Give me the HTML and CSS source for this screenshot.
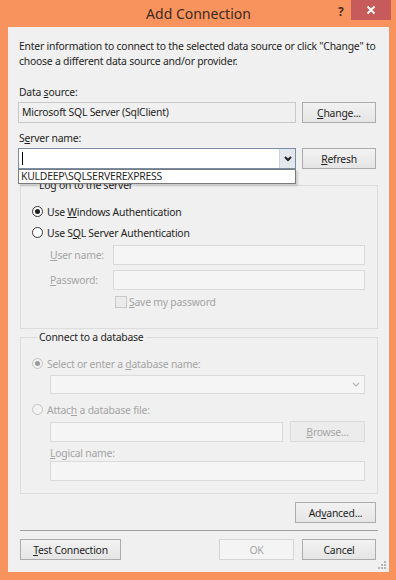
FILE: index.html
```html
<html>

<head>
  <meta charset="utf8">
  <title>Add Connection</title>
  <link rel="stylesheet" href="styles.css">
</head>

<body>
  <section class="window">
    <div class="titlebar">
      <span class="title">Add Connection</span>
      <span class="help">?</span>
      <span class="close">
        <svg width="10" height="10" viewBox="0 0 10 10"><path d="M1.5 1.5 L8.5 8.5 M8.5 1.5 L1.5 8.5" stroke="#fff" stroke-width="1.8"/></svg>
      </span>
    </div>
    <div class="client">
      <p class="intro">Enter information to connect to the selected data source or click "Change" to<br>choose a different data source and/or provider.</p>

      <div class="label ds-label">Data <u>s</u>ource:</div>
      <div class="row">
        <div class="textbox readonly">Microsoft SQL Server (SqlClient)</div>
        <button class="btn"><u>C</u>hange...</button>
      </div>

      <div class="label sn-label">S<u>e</u>rver name:</div>
      <div class="row server-row">
        <div class="combo focused">
          <span class="caret"></span>
          <span class="arrow">
            <svg width="8" height="6" viewBox="0 0 8 6"><path d="M1 1 L4 4 L7 1" stroke="#222" stroke-width="2" fill="none"/></svg>
          </span>
        </div>
        <button class="btn"><u>R</u>efresh</button>
        <div class="droplist">KULDEEP\SQLSERVEREXPRESS</div>
      </div>

      <fieldset class="group logon">
        <legend>Log on to the server</legend>
        <div class="radio-row first">
          <span class="radio checked"></span>
          <span>Use <u>W</u>indows Authentication</span>
        </div>
        <div class="radio-row">
          <span class="radio"></span>
          <span>Use S<u>Q</u>L Server Authentication</span>
        </div>
        <div class="field-row user">
          <span class="field-name disabled"><u>U</u>ser name:</span>
          <div class="textbox disabled-box"></div>
        </div>
        <div class="field-row pass">
          <span class="field-name disabled"><u>P</u>assword:</span>
          <div class="textbox disabled-box"></div>
        </div>
        <div class="check-row">
          <span class="checkbox"></span>
          <span class="disabled"><u>S</u>ave my password</span>
        </div>
      </fieldset>

      <fieldset class="group connect">
        <legend>Connect to a database</legend>
        <div class="radio-row first disabled">
          <span class="radio checked off"></span>
          <span>Select or enter a <u>d</u>atabase name:</span>
        </div>
        <div class="indent">
          <div class="combo disabled-box db-combo">
            <span class="arrow plain">
              <svg width="8" height="6" viewBox="0 0 8 6"><path d="M1 1 L4 4 L7 1" stroke="#b5b5b5" stroke-width="1.2" fill="none"/></svg>
            </span>
          </div>
        </div>
        <div class="radio-row disabled attach">
          <span class="radio off"></span>
          <span>Attac<u>h</u> a database file:</span>
        </div>
        <div class="indent file-row">
          <div class="textbox disabled-box"></div>
          <button class="btn btn-off"><u>B</u>rowse...</button>
        </div>
        <div class="indent disabled logical"><u>L</u>ogical name:</div>
        <div class="indent">
          <div class="textbox disabled-box"></div>
        </div>
      </fieldset>

      <div class="adv-row">
        <button class="btn adv">Ad<u>v</u>anced...</button>
      </div>
      <hr class="sep">
      <div class="footer">
        <button class="btn test"><u>T</u>est Connection</button>
        <span class="spacer"></span>
        <button class="btn btn-off ok">OK</button>
        <button class="btn">Cancel</button>
      </div>
      <span class="grip">
        <svg width="8" height="8" viewBox="0 0 8 8" fill="#b8b8b8"><rect x="6" y="0" width="2" height="2"/><rect x="3" y="3" width="2" height="2"/><rect x="6" y="3" width="2" height="2"/><rect x="0" y="6" width="2" height="2"/><rect x="3" y="6" width="2" height="2"/><rect x="6" y="6" width="2" height="2"/></svg>
      </span>
    </div>
  </section>
</body>

</html>
```

FILE: styles.css
```css
* {
  margin: 0;
  padding: 0;
  box-sizing: border-box;
}

body {
  font-family: "Noto Sans", "Open Sans", sans-serif;
  font-size: 10.4px;
  letter-spacing: -0.22px;
  color: #1e1e1e;
  background: #f9935e;
  width: 396px;
  height: 580px;
  overflow: hidden;
}

u {
  text-decoration: underline;
  text-underline-offset: 1px;
}

.window {
  height: 580px;
  padding: 0 7px 8px 8px;
  display: flex;
  flex-direction: column;
}

.titlebar {
  height: 27px;
  position: relative;
  display: flex;
  justify-content: center;
}

.title {
  font-size: 14px;
  letter-spacing: 0;
  color: #3d2a20;
  line-height: 27px;
}

.help {
  position: absolute;
  left: 330px;
  top: 3px;
  font-weight: bold;
  font-size: 12px;
  color: #4a2b1e;
}

.close {
  position: absolute;
  left: 343px;
  top: 0;
  width: 40px;
  height: 20px;
  background: #c75b5c;
  display: flex;
  align-items: center;
  justify-content: center;
}

.client {
  flex: 1;
  background: #f0f0f0;
  padding: 12px 13px 0 10px;
  position: relative;
}

.intro {
  line-height: 15px;
  padding-left: 1px;
  white-space: nowrap;
}

.label {
  line-height: 15px;
  padding-left: 1px;
}

.ds-label {
  margin-top: 16px;
}

.sn-label {
  margin-top: 8px;
}

.row {
  display: flex;
  gap: 6px;
  height: 21px;
  margin-top: 2px;
}

.server-row {
  position: relative;
  margin-top: 2px;
}

.textbox {
  flex: 1;
  height: 100%;
  border: 1px solid #abadb3;
  background: #fff;
  line-height: 19px;
  padding-left: 3px;
}

.readonly {
  background: #f0f0f0;
  border-color: #c8c8c8;
}

.btn {
  width: 74px;
  height: 21px;
  font: inherit;
  letter-spacing: inherit;
  color: #1e1e1e;
  border: 1px solid #acacac;
  background: linear-gradient(#f2f2f2, #e5e5e5);
  text-align: center;
}

.btn-off {
  color: #a6a6a6;
  border-color: #d5d5d5;
  background: #f4f4f4;
}

.combo {
  flex: 1;
  height: 100%;
  border: 1px solid #7b8ea5;
  background: #fff;
  display: flex;
  align-items: center;
  position: relative;
}

.caret {
  width: 1px;
  height: 13px;
  background: #000;
  margin-left: 3px;
}

.arrow {
  margin-left: auto;
  width: 16px;
  height: 100%;
  background: #e2e8ee;
  border-left: 1px solid #c9d2db;
  display: flex;
  align-items: center;
  justify-content: center;
}

.arrow.plain {
  background: transparent;
  border: none;
}

.droplist {
  position: absolute;
  left: 0;
  top: 21px;
  width: 278px;
  height: 15px;
  background: #fff;
  border: 1px solid #7a7a7a;
  line-height: 13px;
  padding-left: 2px;
  box-shadow: 2px 2px 2px rgba(0, 0, 0, 0.15);
  z-index: 2;
}

.group {
  margin-left: 2px;
  width: 358px;
  border: 1px solid #dcdcdc;
  padding: 0 12px 0 11px;
}

.group legend {
  margin-left: 5px;
  padding: 0 3px 0 2px;
  line-height: 15px;
}

.logon {
  margin-top: 9px;
  height: 151px;
}

.connect {
  margin-top: 1px;
  height: 164px;
}

.radio-row {
  display: flex;
  align-items: center;
  gap: 4px;
  height: 21px;
}

.radio-row.first {
  margin-top: 8px;
}

.radio {
  width: 11px;
  height: 11px;
  border-radius: 50%;
  border: 1px solid #333;
  background: #fff;
  display: flex;
  align-items: center;
  justify-content: center;
}

.radio.checked::after {
  content: "";
  width: 5px;
  height: 5px;
  border-radius: 50%;
  background: #1e1e1e;
}

.radio.off {
  border-color: #c4c4c4;
  background: #f2f2f2;
}

.radio.off.checked::after {
  background: #9a9a9a;
}

.disabled {
  color: #a4a4a4;
}

.field-row {
  display: flex;
  align-items: center;
  height: 20px;
  padding-left: 18px;
}

.field-row.user {
  margin-top: 2px;
}

.field-row.pass {
  margin-top: 5px;
}

.field-name {
  width: 63px;
}

.disabled-box {
  background: #f5f5f5;
  border-color: #dadada;
}

.check-row {
  display: flex;
  align-items: center;
  gap: 2px;
  height: 16px;
  margin-top: 4px;
  padding-left: 83px;
}

.checkbox {
  width: 12px;
  height: 12px;
  border: 1px solid #c8c8c8;
  background: #ebebeb;
}

.indent {
  padding-left: 18px;
}

.db-combo {
  height: 19px;
  margin-top: 1px;
}

.attach {
  margin-top: 5px;
}

.file-row {
  display: flex;
  gap: 7px;
  height: 21px;
  margin-top: 1px;
}

.file-row .textbox {
  height: 20px;
  margin-top: 1px;
}

.file-row .btn {
  width: 75px;
  border-color: #dadada;
  background: #ececec;
}

.logical {
  line-height: 15px;
  margin-top: 4px;
}

.logical + .indent .textbox {
  height: 20px;
  display: block;
}

.adv-row {
  display: flex;
  justify-content: flex-end;
  margin-top: 8px;
}

.adv {
  width: 81px;
}

.sep {
  border: none;
  border-top: 1px solid #a0a0a0;
  margin: 7px 0 0 2px;
  width: 358px;
}

.footer {
  display: flex;
  gap: 8px;
  margin-top: 8px;
  padding-left: 2px;
}

.test {
  width: 101px;
}

.spacer {
  flex: 1;
}

.ok {
  width: 75px;
}

.grip {
  position: absolute;
  right: 3px;
  bottom: 3px;
  display: flex;
}
```
